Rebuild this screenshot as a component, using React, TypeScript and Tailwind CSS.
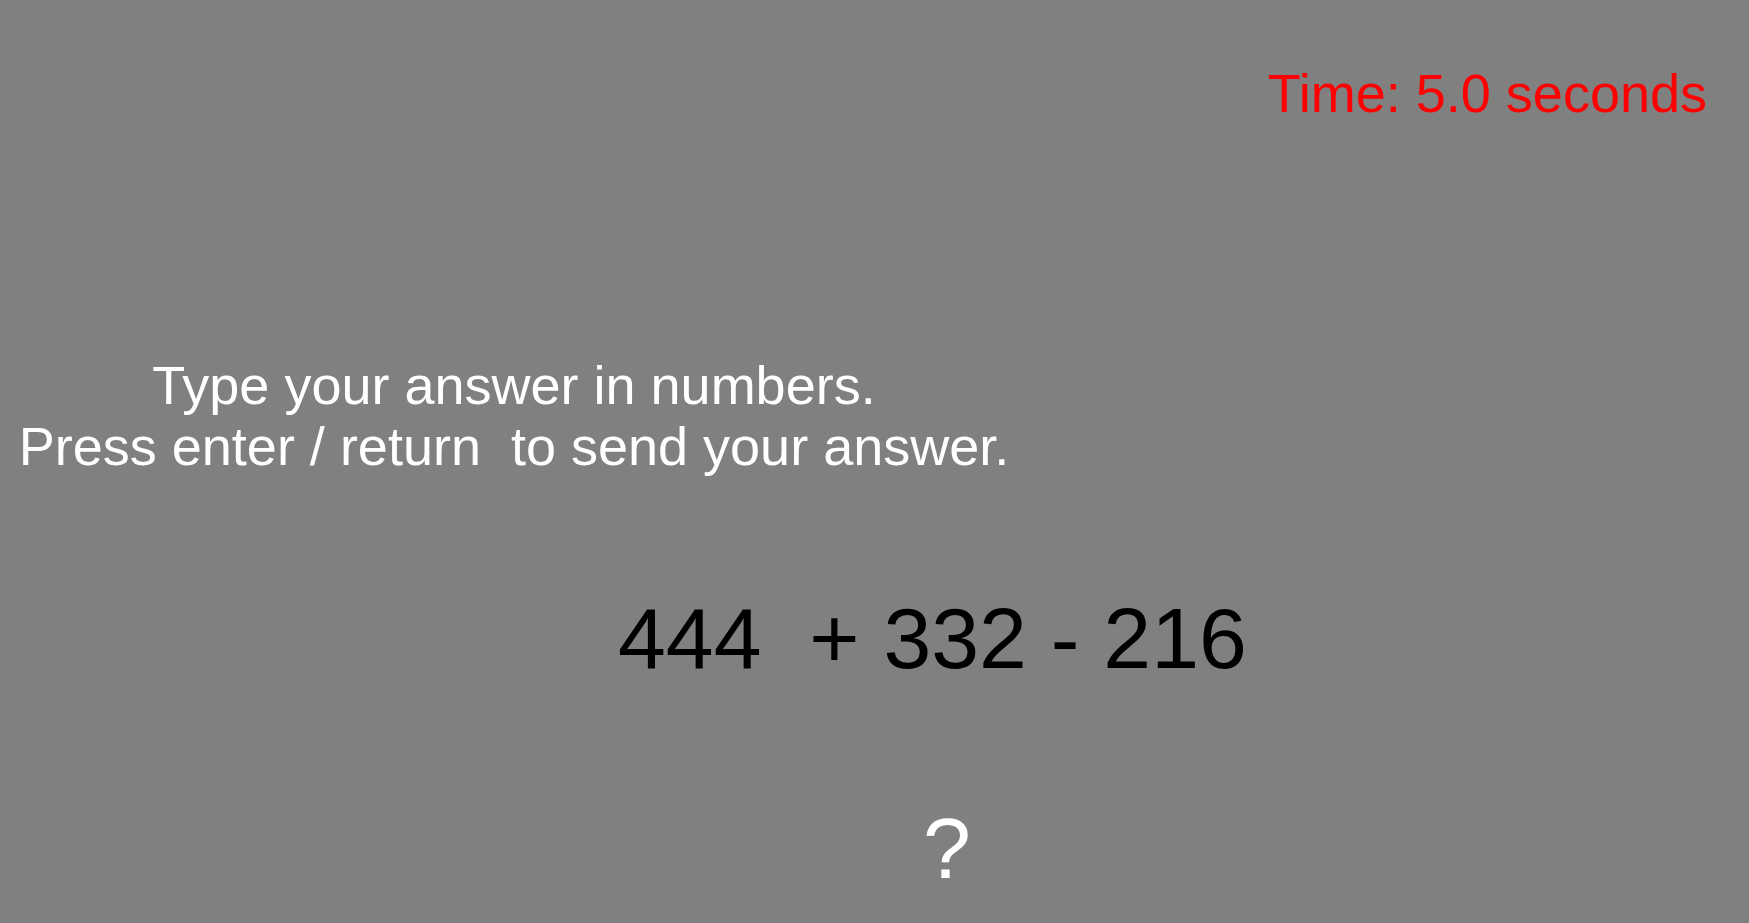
import React from "react";

export default function App() {
  return (
    <div
      className="w-[1749px] h-[923px] bg-[#808080] overflow-hidden flex flex-col"
      style={{ fontFamily: '"Liberation Sans", Arial, sans-serif' }}
    >
      <div className="flex justify-end pr-[42px] mt-[66px]">
        <div className="text-[54px] leading-none text-[#ff0000]">Time: 5.0 seconds</div>
      </div>
      <div className="w-[1028px] mt-[235px] text-center text-white text-[54px] leading-[61px] whitespace-pre">
        <div>Type your answer in numbers.</div>
        <div>Press enter / return  to send your answer.</div>
      </div>
      <div className="ml-[618px] mt-[118px] text-[86px] leading-none text-black whitespace-pre">
        444  + 332 - 216
      </div>
      <div className="ml-[923px] mt-[124px] text-[86px] leading-none text-white">?</div>
    </div>
  );
}
